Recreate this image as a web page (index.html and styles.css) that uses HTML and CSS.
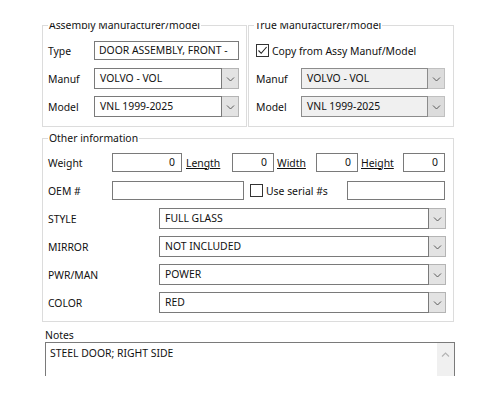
FILE: index.html
```html
<!DOCTYPE html>
<html>
<head>
<meta charset="utf-8">
<link rel="stylesheet" href="styles.css">
</head>
<body>
<div class="window">
  <div class="inner">
    <div class="top-row">
      <fieldset class="group group-assy">
        <legend class="legend">Assembly Manufacturer/model</legend>
        <div class="row">
          <span class="lbl lbl-top">Type</span>
          <div class="textbox w-assy">DOOR ASSEMBLY, FRONT -</div>
        </div>
        <div class="row">
          <span class="lbl lbl-top">Manuf</span>
          <div class="combo w-assy">
            <div class="combo-field">VOLVO - VOL</div>
            <div class="combo-btn"><svg width="9" height="6" viewBox="0 0 9 6"><path d="M1 1.5 L4.5 5 L8 1.5" fill="none" stroke="#5a5a5a" stroke-width="1"/></svg></div>
          </div>
        </div>
        <div class="row">
          <span class="lbl lbl-top">Model</span>
          <div class="combo w-assy">
            <div class="combo-field">VNL 1999-2025</div>
            <div class="combo-btn"><svg width="9" height="6" viewBox="0 0 9 6"><path d="M1 1.5 L4.5 5 L8 1.5" fill="none" stroke="#5a5a5a" stroke-width="1"/></svg></div>
          </div>
        </div>
      </fieldset>
      <fieldset class="group group-true">
        <legend class="legend legend-true">True Manufacturer/model</legend>
        <div class="row">
          <span class="checkbox"><svg width="11" height="11" viewBox="0 0 11 11"><path d="M1.5 5.5 L4.2 8.3 L9.6 2" fill="none" stroke="#222" stroke-width="1.1"/></svg></span>
          <span class="check-text">Copy from Assy Manuf/Model</span>
        </div>
        <div class="row">
          <span class="lbl lbl-true">Manuf</span>
          <div class="combo combo-disabled w-true">
            <div class="combo-field">VOLVO - VOL</div>
            <div class="combo-btn"><svg width="9" height="6" viewBox="0 0 9 6"><path d="M1 1.5 L4.5 5 L8 1.5" fill="none" stroke="#5a5a5a" stroke-width="1"/></svg></div>
          </div>
        </div>
        <div class="row">
          <span class="lbl lbl-true">Model</span>
          <div class="combo combo-disabled w-true">
            <div class="combo-field">VNL 1999-2025</div>
            <div class="combo-btn"><svg width="9" height="6" viewBox="0 0 9 6"><path d="M1 1.5 L4.5 5 L8 1.5" fill="none" stroke="#5a5a5a" stroke-width="1"/></svg></div>
          </div>
        </div>
      </fieldset>
    </div>

    <fieldset class="group group-other">
      <legend class="legend">Other information</legend>
      <div class="row">
        <span class="lbl lbl-dim">Weight</span>
        <div class="textbox num w-weight">0</div>
        <a class="link link-length">Length</a>
        <div class="textbox num w-dim">0</div>
        <a class="link link-width">Width</a>
        <div class="textbox num w-dim">0</div>
        <a class="link link-height">Height</a>
        <div class="textbox num w-dim">0</div>
      </div>
      <div class="row">
        <span class="lbl lbl-dim">OEM #</span>
        <div class="textbox w-oem"></div>
        <span class="checkbox cb-serial"></span>
        <span class="check-text">Use serial #s</span>
        <div class="textbox w-serial"></div>
      </div>
      <div class="row">
        <span class="lbl lbl-attr">STYLE</span>
        <div class="combo w-attr">
          <div class="combo-field">FULL GLASS</div>
          <div class="combo-btn"><svg width="9" height="6" viewBox="0 0 9 6"><path d="M1 1.5 L4.5 5 L8 1.5" fill="none" stroke="#5a5a5a" stroke-width="1"/></svg></div>
        </div>
      </div>
      <div class="row">
        <span class="lbl lbl-attr">MIRROR</span>
        <div class="combo w-attr">
          <div class="combo-field">NOT INCLUDED</div>
          <div class="combo-btn"><svg width="9" height="6" viewBox="0 0 9 6"><path d="M1 1.5 L4.5 5 L8 1.5" fill="none" stroke="#5a5a5a" stroke-width="1"/></svg></div>
        </div>
      </div>
      <div class="row">
        <span class="lbl lbl-attr">PWR/MAN</span>
        <div class="combo w-attr">
          <div class="combo-field">POWER</div>
          <div class="combo-btn"><svg width="9" height="6" viewBox="0 0 9 6"><path d="M1 1.5 L4.5 5 L8 1.5" fill="none" stroke="#5a5a5a" stroke-width="1"/></svg></div>
        </div>
      </div>
      <div class="row">
        <span class="lbl lbl-attr">COLOR</span>
        <div class="combo w-attr">
          <div class="combo-field">RED</div>
          <div class="combo-btn"><svg width="9" height="6" viewBox="0 0 9 6"><path d="M1 1.5 L4.5 5 L8 1.5" fill="none" stroke="#5a5a5a" stroke-width="1"/></svg></div>
        </div>
      </div>
    </fieldset>

    <div class="notes">
      <div class="notes-label">Notes</div>
      <div class="notes-box">
        <div class="notes-text">STEEL DOOR; RIGHT SIDE</div>
        <div class="scrollbar">
          <svg width="9" height="6" viewBox="0 0 9 6"><path d="M1 4.5 L4.5 1 L8 4.5" fill="none" stroke="#b4b4b4" stroke-width="1.2"/></svg>
        </div>
      </div>
    </div>
  </div>
</div>
</body>
</html>
```

FILE: styles.css
```css
html, body {
  margin: 0;
  padding: 0;
  background: #ffffff;
}

body {
  font-family: "Noto Sans", "Open Sans", "DejaVu Sans", sans-serif;
  font-size: 10.4px;
  color: #111111;
}

.window {
  margin-top: 23px;
  width: 500px;
  height: 353px;
  overflow: hidden;
}

.inner {
  margin-top: -5px;
  padding-left: 42px;
}

.top-row {
  display: flex;
  align-items: stretch;
}

.group {
  margin: 0;
  border: 1px solid #dcdcdc;
  min-width: 0;
  box-sizing: border-box;
}

.legend {
  padding: 0 1px;
  margin-left: 0;
  line-height: 14px;
}

.legend-true {
  margin-left: -2px;
}

.group-assy {
  width: 205px;
  padding: 8px 7px 9px 5px;
}

.group-true {
  width: 206px;
  margin-left: 1px;
  padding: 8px 8px 9px 7px;
}

.group-other {
  width: 412px;
  margin-top: 4px;
  padding: 7px 8px 8px 5px;
}

.row {
  display: flex;
  align-items: center;
  height: 21px;
}

.row + .row {
  margin-top: 7px;
}

.lbl {
  flex: none;
  white-space: nowrap;
}

.lbl-top { width: 46px; }
.lbl-true { width: 45px; }
.lbl-dim { width: 64px; }
.lbl-attr { width: 111px; }

.textbox {
  flex: none;
  box-sizing: border-box;
  height: 19px;
  border: 1px solid #7a7a7a;
  background: #ffffff;
  padding: 0 4px;
  line-height: 17px;
  white-space: nowrap;
  overflow: hidden;
}

.textbox.num {
  text-align: right;
  padding-right: 6px;
}

.w-assy { width: 145px; }
.w-true { width: 144px; }
.w-weight { width: 70px; }
.w-dim { width: 42px; }
.w-oem { width: 132px; }
.w-serial { width: 98px; margin-left: auto; }
.w-attr { width: 287px; }

.combo {
  flex: none;
  display: flex;
  height: 21px;
  box-sizing: border-box;
}

.combo-field {
  flex: 1;
  min-width: 0;
  box-sizing: border-box;
  border: 1px solid #7a7a7a;
  background: #ffffff;
  padding: 0 5px;
  line-height: 19px;
  white-space: nowrap;
  overflow: hidden;
}

.combo-btn {
  flex: none;
  width: 17px;
  box-sizing: border-box;
  border: 1px solid #b4b4b4;
  border-left: none;
  background: #e3e3e3;
  display: flex;
  align-items: center;
  justify-content: center;
}

.combo-disabled .combo-field {
  background: #f0f0f0;
  border-color: #8c8c8c;
}

.combo-disabled .combo-btn {
  background: #dcdcdc;
  border-color: #c0c0c0;
}

.checkbox {
  flex: none;
  box-sizing: border-box;
  width: 13px;
  height: 13px;
  border: 1px solid #333333;
  background: #ffffff;
  display: flex;
  align-items: center;
  justify-content: center;
}

.check-text {
  margin-left: 3px;
  white-space: nowrap;
}

.cb-serial {
  margin-left: 6px;
}

.link {
  flex: none;
  color: #111111;
  text-decoration: underline;
  white-space: nowrap;
}

.link-length { margin-left: 4px; width: 46px; }
.link-width { margin-left: 3px; width: 39px; }
.link-height { margin-left: 3px; width: 42px; }

.notes {
  margin-top: 6px;
  margin-left: 3px;
  width: 410px;
}

.notes-label {
  line-height: 14px;
}

.notes-box {
  display: flex;
  box-sizing: border-box;
  height: 60px;
  border: 1px solid #7a7a7a;
  background: #ffffff;
}

.notes-text {
  flex: 1;
  padding: 2px 4px;
  line-height: 16px;
}

.scrollbar {
  flex: none;
  width: 17px;
  background: #f0f0f0;
  display: flex;
  justify-content: center;
  padding-top: 9px;
  align-items: flex-start;
}
```
